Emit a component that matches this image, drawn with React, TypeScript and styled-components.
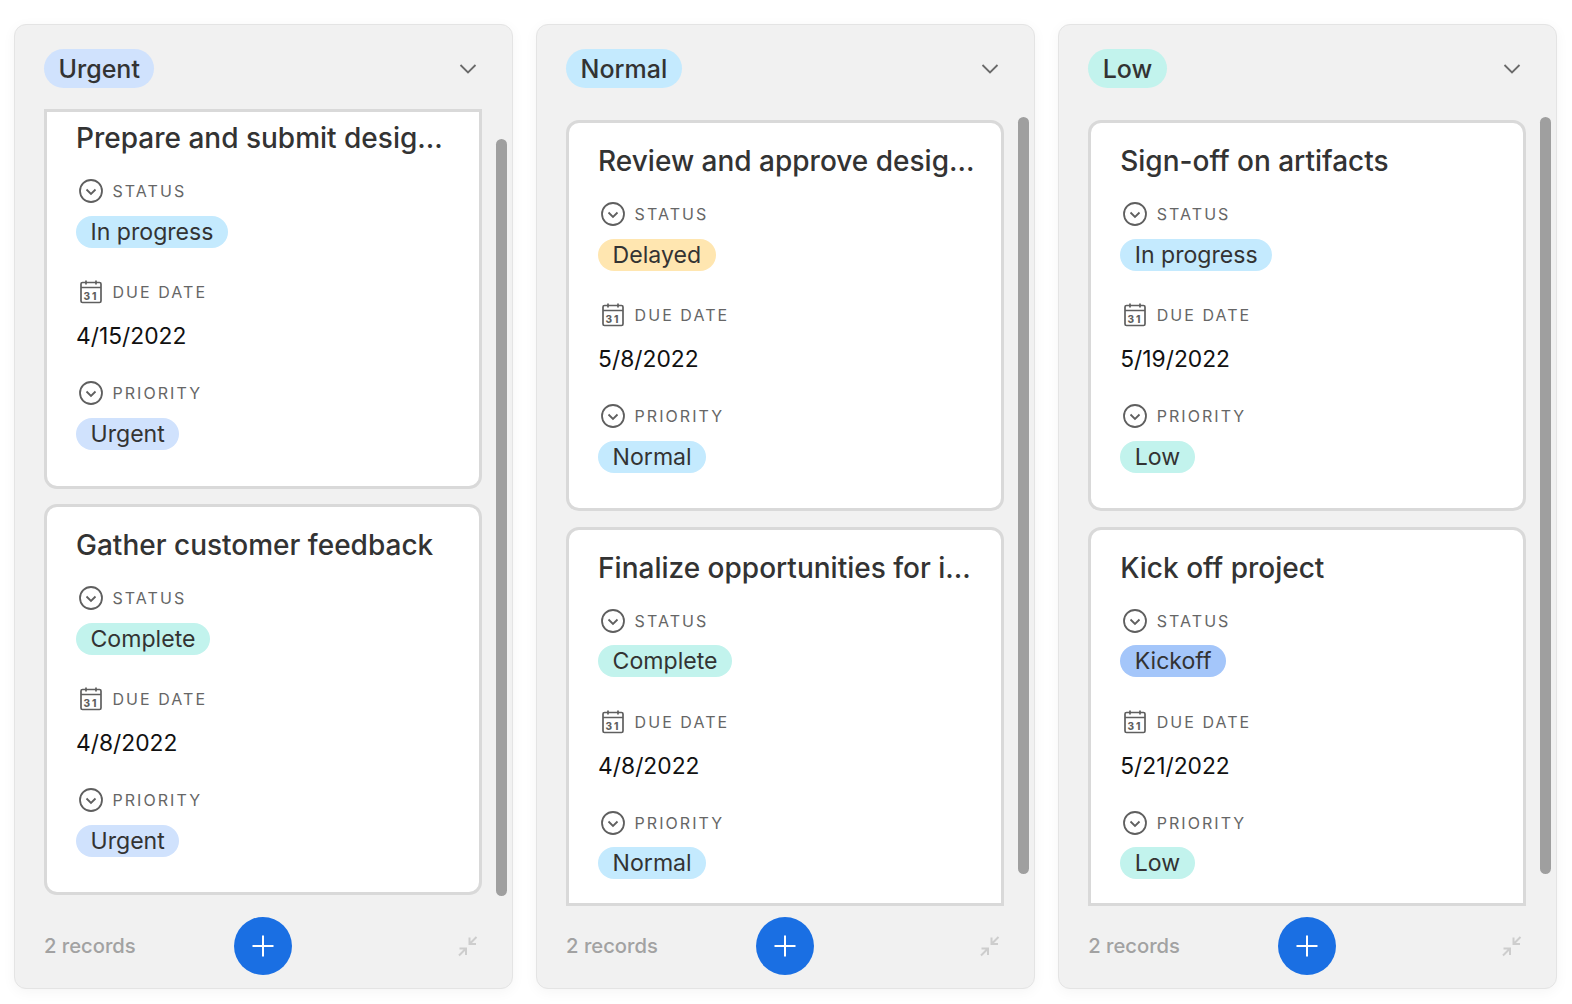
import React from "react";
import styled, { createGlobalStyle } from "styled-components";

const Global = createGlobalStyle`
  html, body { margin: 0; padding: 0; background: #fff; }
  body { font-family: Inter, "Liberation Sans", sans-serif; overflow: hidden; }
`;

const Board = styled.main`
  display: flex;
  gap: 22.8px;
  padding: 24px 0 0 14px;
  width: 1572px;
  height: 1004px;
  box-sizing: border-box;
`;

const Column = styled.section`
  position: relative;
  flex: 0 0 498.6px;
  height: 964.5px;
  box-sizing: border-box;
  background: #f1f1f1;
  border: 1px solid #e4e4e4;
  border-radius: 12px;
  box-shadow: 0 3px 14px rgba(0, 0, 0, 0.045);
  display: flex;
  flex-direction: column;
  padding: 0 30.3px 0 29px;
`;

const Header = styled.header`
  flex: 0 0 84px;
  height: 84px;
  display: flex;
  align-items: center;
  justify-content: space-between;
  padding: 3px 5px 0 0;
  box-sizing: border-box;
`;

const Pill = styled.span<{ $bg: string; $big?: boolean }>`
  display: inline-flex;
  align-items: center;
  height: ${(p) => (p.$big ? 39 : 32)}px;
  padding: 0 14.5px;
  border-radius: 20px;
  background: ${(p) => p.$bg};
  color: #333;
  font-size: ${(p) => (p.$big ? 25 : 23.1)}px;
  font-weight: ${(p) => (p.$big ? 500 : 400)};
  white-space: nowrap;
`;

const List = styled.div<{ $scrolled: boolean }>`
  flex: 0 0 797px;
  height: 797px;
  overflow: hidden;
  display: flex;
  flex-direction: column;
  gap: 15.5px;
  box-sizing: border-box;
  padding-top: ${(p) => (p.$scrolled ? 0 : 11)}px;
  width: 438px;
`;

const Card = styled.article<{ $clip?: "top" | "bottom" }>`
  flex: none;
  box-sizing: border-box;
  background: #fff;
  border: 3px solid #d9d9d9;
  border-radius: ${(p) =>
    p.$clip === "top" ? "0 0 13px 13px" : p.$clip === "bottom" ? "13px 13px 0 0" : "13px"};
  height: ${(p) => (p.$clip ? 379.5 : 391)}px;
  padding: ${(p) => (p.$clip === "top" ? 9 : 21)}px 25px 0 29px;
  overflow: hidden;
`;

const Title = styled.h3`
  margin: 0 0 24px;
  font-size: 28px;
  line-height: 34px;
  font-weight: 500;
  color: #333;
  white-space: nowrap;
  overflow: hidden;
  text-overflow: ellipsis;
`;

const Field = styled.div`
  height: 101.1px;
`;

const FieldLabel = styled.div`
  display: flex;
  align-items: center;
  gap: 9px;
  height: 24px;
  padding-left: 1.5px;
  color: #666;
  font-size: 16px;
  font-weight: 400;
  letter-spacing: 2.05px;
`;

const PillSlot = styled.div`
  margin-top: 12.5px;
  display: flex;
`;

const DateValue = styled.div`
  margin-top: 16px;
  font-size: 22.8px;
  line-height: 32px;
  color: #111;
`;

const Scrollbar = styled.div<{ $top: number }>`
  position: absolute;
  right: 5.6px;
  top: ${(p) => p.$top}px;
  width: 11px;
  height: 757px;
  border-radius: 6px;
  background: #9f9f9f;
`;

const Footer = styled.footer`
  flex: 1;
  display: grid;
  grid-template-columns: 1fr auto 1fr;
  align-items: center;
  padding-bottom: 2px;
`;

const Count = styled.span`
  font-size: 20.2px;
  font-weight: 500;
  color: #a2a2a2;
`;

const AddButton = styled.button`
  width: 58px;
  height: 58px;
  padding: 0;
  border: none;
  border-radius: 50%;
  background: #1a6fe3;
  display: flex;
  align-items: center;
  justify-content: center;
`;

const CollapseSlot = styled.div`
  display: flex;
  justify-content: flex-end;
  padding-right: 4px;
`;

const ChevronDown = () => (
  <svg width="18" height="12" viewBox="0 0 18 12" fill="none" stroke="#6a6a6a" strokeWidth="1.8">
    <path d="M1.5 2 L9 9.5 L16.5 2" />
  </svg>
);

const CircleChevron = () => (
  <svg width="26" height="26" viewBox="0 0 26 26" fill="none" stroke="#5f5f5f" strokeWidth="1.8">
    <circle cx="13" cy="13" r="11" />
    <path d="M8.5 11.5 L13 16 L17.5 11.5" strokeWidth="1.8" />
  </svg>
);

const CalendarIcon = () => (
  <svg width="26" height="26" viewBox="0 0 26 26" fill="none" stroke="#5f5f5f" strokeWidth="1.7">
    <rect x="3" y="3.5" width="20" height="20" rx="1.5" />
    <path d="M3 8.5 H23 M8 1.5 V5.5 M18 1.5 V5.5" />
    <text
      x="13"
      y="20.5"
      textAnchor="middle"
      fontSize="10"
      fontWeight="800"
      fontFamily="Inter, sans-serif"
      fill="#5f5f5f"
      stroke="none"
    >
      31
    </text>
  </svg>
);

const PlusIcon = () => (
  <svg width="24" height="24" viewBox="0 0 24 24" stroke="#fff" strokeWidth="2" fill="none">
    <path d="M12 1.5 V22.5 M1.5 12 H22.5" />
  </svg>
);

const CollapseIcon = () => (
  <svg width="20" height="22" viewBox="0 0 20 22" fill="none" stroke="#cdcdcd" strokeWidth="2">
    <path d="M18.5 2 L12 8.5 M11.5 2.5 V9 H18" />
    <path d="M1 20.5 L7.5 14 M1.5 13.5 H8 V20" />
  </svg>
);

const colors: Record<string, string> = {
  Urgent: "#d0e2fd",
  Normal: "#c4eafe",
  Low: "#c2f3ed",
  "In progress": "#c4eafe",
  Complete: "#c2f3ed",
  Delayed: "#ffe6b0",
  Kickoff: "#a4c6fa",
};

type Task = {
  title: string;
  status: string;
  date: string;
  priority: string;
  clip?: "top" | "bottom";
};

type Group = { name: string; scrollTop: number; scrolled: boolean; tasks: Task[] };

const groups: Group[] = [
  {
    name: "Urgent",
    scrollTop: 114,
    scrolled: true,
    tasks: [
      { title: "Prepare and submit design brief for review", status: "In progress", date: "4/15/2022", priority: "Urgent", clip: "top" },
      { title: "Gather customer feedback", status: "Complete", date: "4/8/2022", priority: "Urgent" },
    ],
  },
  {
    name: "Normal",
    scrollTop: 92,
    scrolled: false,
    tasks: [
      { title: "Review and approve design brief", status: "Delayed", date: "5/8/2022", priority: "Normal" },
      { title: "Finalize opportunities for improvement", status: "Complete", date: "4/8/2022", priority: "Normal", clip: "bottom" },
    ],
  },
  {
    name: "Low",
    scrollTop: 92,
    scrolled: false,
    tasks: [
      { title: "Sign-off on artifacts", status: "In progress", date: "5/19/2022", priority: "Low" },
      { title: "Kick off project", status: "Kickoff", date: "5/21/2022", priority: "Low", clip: "bottom" },
    ],
  },
];

const TaskCard = ({ task }: { task: Task }) => (
  <Card $clip={task.clip}>
    <Title>{task.title}</Title>
    <Field>
      <FieldLabel>
        <CircleChevron />
        STATUS
      </FieldLabel>
      <PillSlot>
        <Pill $bg={colors[task.status]}>{task.status}</Pill>
      </PillSlot>
    </Field>
    <Field>
      <FieldLabel>
        <CalendarIcon />
        DUE DATE
      </FieldLabel>
      <DateValue>{task.date}</DateValue>
    </Field>
    <Field>
      <FieldLabel>
        <CircleChevron />
        PRIORITY
      </FieldLabel>
      <PillSlot>
        <Pill $bg={colors[task.priority]}>{task.priority}</Pill>
      </PillSlot>
    </Field>
  </Card>
);

export default function App() {
  return (
    <>
      <Global />
      <Board>
        {groups.map((g) => (
          <Column key={g.name}>
            <Header>
              <Pill $big $bg={colors[g.name]}>
                {g.name}
              </Pill>
              <ChevronDown />
            </Header>
            <List $scrolled={g.scrolled}>
              {g.tasks.map((t) => (
                <TaskCard key={t.title} task={t} />
              ))}
            </List>
            <Scrollbar $top={g.scrollTop} />
            <Footer>
              <Count>2 records</Count>
              <AddButton aria-label="Add record">
                <PlusIcon />
              </AddButton>
              <CollapseSlot>
                <CollapseIcon />
              </CollapseSlot>
            </Footer>
          </Column>
        ))}
      </Board>
    </>
  );
}
